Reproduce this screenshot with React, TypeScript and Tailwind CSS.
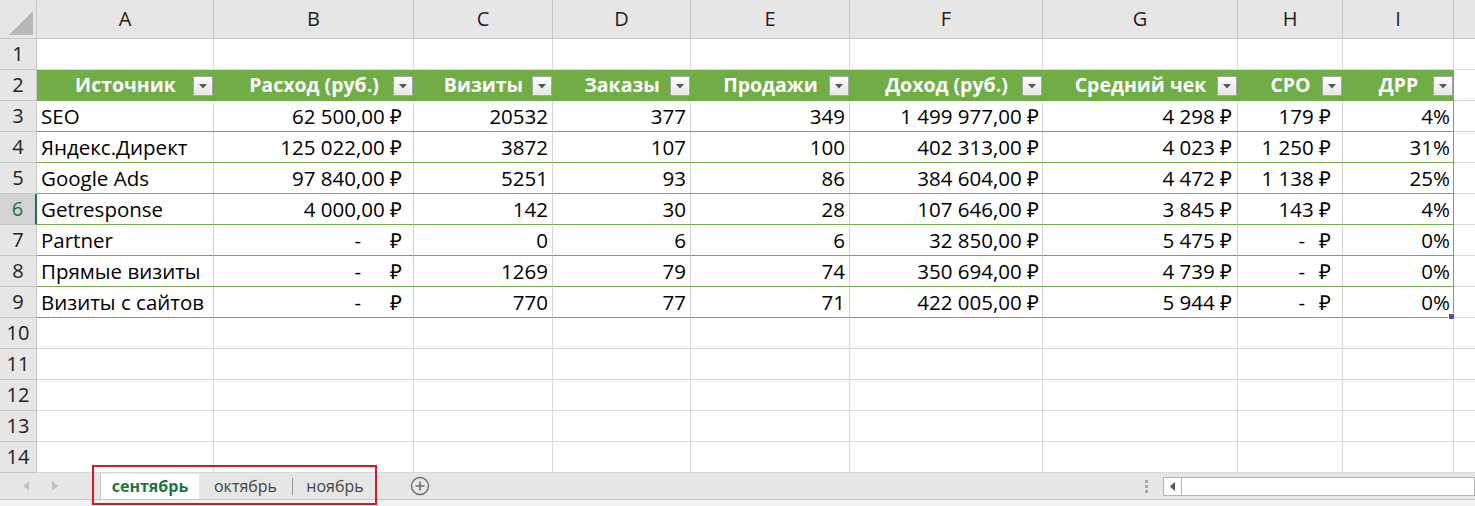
import React from 'react';

const COLS = ['A', 'B', 'C', 'D', 'E', 'F', 'G', 'H', 'I'];
const WIDTHS = [177, 200, 139, 138, 159, 193, 195, 105, 111];
const HEADERS = ['Источник', 'Расход (руб.)', 'Визиты', 'Заказы', 'Продажи', 'Доход (руб.)', 'Средний чек', 'CPO', 'ДРР'];

// "-" marks an accounting dash cell
const DATA: string[][] = [
  ['SEO', '62 500,00 ₽', '20532', '377', '349', '1 499 977,00 ₽', '4 298 ₽', '179 ₽', '4%'],
  ['Яндекс.Директ', '125 022,00 ₽', '3872', '107', '100', '402 313,00 ₽', '4 023 ₽', '1 250 ₽', '31%'],
  ['Google Ads', '97 840,00 ₽', '5251', '93', '86', '384 604,00 ₽', '4 472 ₽', '1 138 ₽', '25%'],
  ['Getresponse', '4 000,00 ₽', '142', '30', '28', '107 646,00 ₽', '3 845 ₽', '143 ₽', '4%'],
  ['Partner', '-', '0', '6', '6', '32 850,00 ₽', '5 475 ₽', '-', '0%'],
  ['Прямые визиты', '-', '1269', '79', '74', '350 694,00 ₽', '4 739 ₽', '-', '0%'],
  ['Визиты с сайтов', '-', '770', '77', '71', '422 005,00 ₽', '5 944 ₽', '-', '0%'],
];

// right padding per column (accounting columns keep extra room)
const PAD = ['', 'pr-[11px]', 'pr-[4px]', 'pr-[4px]', 'pr-[4px]', 'pr-[3px]', 'pr-[5px]', 'pr-[11px]', 'pr-[3px]'];

const font = { fontFamily: '"Open Sans", "Liberation Sans", sans-serif' };

function FilterButton() {
  return (
    <div className="absolute right-[1px] top-[6px] w-[20px] h-[20px] border border-[#a6a6a6] bg-gradient-to-b from-white to-[#e6e6e6] flex items-center justify-center">
      <svg width="8" height="5" viewBox="0 0 8 5">
        <path d="M0 0h8L4 4.5z" fill="#555" />
      </svg>
    </div>
  );
}

function RowHeader({ n, active }: { n: number; active?: boolean }) {
  return (
    <div
      className={`h-[31px] flex items-center justify-center text-[20px] border-b border-[#c8c8c8] ${
        active ? 'bg-[#d3d3d3] text-[#217346] border-r-2 border-r-[#217346]' : 'bg-[#e6e6e6] text-[#222] border-r border-r-[#c8c8c8]'
      }`}
    >
      {n}
    </div>
  );
}

function EmptyRow({ n }: { n: number }) {
  return (
    <>
      <RowHeader n={n} />
      {COLS.map((c) => (
        <div key={c} className="h-[31px] border-r border-b border-[#d9d9d9] bg-white" />
      ))}
      <div className="h-[31px] border-b border-[#d9d9d9] bg-white" />
    </>
  );
}

function DataCell({ value, col, last }: { value: string; col: number; last: boolean }) {
  const right = last ? 'border-r border-r-[#70ad47]' : 'border-r border-r-[#d4d4d4]';
  const base = `h-[31px] border-b border-b-[#70ad47] bg-white flex items-center text-[20.5px] text-black ${right}`;
  if (col === 0) {
    return <div className={`${base} pl-[4px]`}>{value}</div>;
  }
  if (value === '-') {
    const dashGap = col === 1 ? 'mr-[29px]' : 'mr-[14px]';
    return (
      <div className={`${base} justify-end ${PAD[col]}`}>
        <span className={dashGap}>-</span>
        <span>₽</span>
      </div>
    );
  }
  return <div className={`${base} justify-end ${PAD[col]}`}>{value}</div>;
}

export default function App() {
  const template = `37px ${WIDTHS.map((w) => `${w}px`).join(' ')} 1fr`;
  return (
    <div className="w-[1475px] h-[506px] bg-white overflow-hidden relative select-none" style={font}>
      <div className="grid" style={{ gridTemplateColumns: template }}>
        {/* column letters */}
        <div className="h-[39px] bg-[#e6e6e6] border-r border-b border-[#c8c8c8] relative">
          <svg className="absolute right-[3px] bottom-[3px]" width="24" height="24" viewBox="0 0 24 24">
            <path d="M24 0V24H0z" fill="#b8b8b8" />
          </svg>
        </div>
        {COLS.map((c) => (
          <div
            key={c}
            className="h-[39px] bg-[#e6e6e6] border-r border-b border-[#c8c8c8] flex items-center justify-center text-[20px] text-[#222]"
          >
            {c}
          </div>
        ))}
        <div className="h-[39px] bg-[#e6e6e6] border-b border-[#c8c8c8]" />

        <EmptyRow n={1} />

        {/* table header */}
        <RowHeader n={2} />
        {HEADERS.map((h) => (
          <div
            key={h}
            className="h-[31px] bg-[#70ad47] border-b border-[#70ad47] relative flex items-center justify-center text-[19.5px] font-bold text-white"
          >
            {h}
            <FilterButton />
          </div>
        ))}
        <div className="h-[31px] border-b border-[#d9d9d9] bg-white" />

        {DATA.map((row, i) => (
          <React.Fragment key={i}>
            <RowHeader n={i + 3} active={i + 3 === 6} />
            {row.map((v, j) => (
              <DataCell key={j} value={v} col={j} last={j === row.length - 1} />
            ))}
            <div className="h-[31px] border-b border-[#d9d9d9] bg-white" />
          </React.Fragment>
        ))}

        {[10, 11, 12, 13, 14].map((n) => (
          <EmptyRow key={n} n={n} />
        ))}
      </div>

      {/* fill handle */}
      <div className="absolute left-[1448px] top-[313px] w-[7px] h-[7px] bg-[#4655b5] border border-white" />

      {/* sheet tabs bar */}
      <div className="h-[27px] bg-[#e6e6e6] flex items-stretch border-b border-[#c6c6c6]">
        <div className="w-[100px] flex items-center gap-[21px] pl-[23px]">
          <svg width="7" height="10" viewBox="0 0 7 10">
            <path d="M6 0v10L0 5z" fill="#c4c4c4" />
          </svg>
          <svg width="7" height="10" viewBox="0 0 7 10">
            <path d="M1 0v10l6-5z" fill="#c4c4c4" />
          </svg>
        </div>
        <div className="flex items-stretch pt-[1px]">
          <div className="w-[99px] bg-white border-l border-[#c6c6c6] flex flex-col">
            <div className="flex-1 flex items-center justify-center text-[16px] font-bold text-[#217346]">сентябрь</div>
            <div className="h-[2px] bg-[#217346] mx-[1px] mb-[2px]" />
          </div>
          <div className="w-[93px] flex items-center justify-center text-[16px] text-[#444] pb-[2px]">октябрь</div>
          <div className="w-[1px] bg-[#9a9a9a] my-[4px]" />
          <div className="w-[84px] flex items-center justify-center text-[16px] text-[#444] pb-[2px]">ноябрь</div>
        </div>
        <div className="ml-[33px] flex items-center">
          <svg width="20" height="20" viewBox="0 0 20 20">
            <circle cx="10" cy="10" r="8.5" fill="none" stroke="#6e6e6e" strokeWidth="1.4" />
            <path d="M10 5.5v9M5.5 10h9" stroke="#6e6e6e" strokeWidth="1.6" />
          </svg>
        </div>
        <div className="flex-1" />
        <div className="flex flex-col justify-center gap-[2px] mr-[15px]">
          <div className="w-[3px] h-[3px] bg-[#a6a6a6]" />
          <div className="w-[3px] h-[3px] bg-[#a6a6a6]" />
          <div className="w-[3px] h-[3px] bg-[#a6a6a6]" />
        </div>
        <div className="flex items-center">
          <div className="h-[19px] w-[312px] bg-white border border-[#b4b4b4] flex items-stretch">
            <div className="w-[18px] border-r border-[#b4b4b4] flex items-center justify-center">
              <svg width="5" height="9" viewBox="0 0 5 9">
                <path d="M5 0v9L0 4.5z" fill="#555" />
              </svg>
            </div>
          </div>
        </div>
      </div>
      <div className="h-[6px] bg-[#f0f0f0]" />

      {/* red annotation */}
      <div className="absolute left-[92px] top-[465px] w-[285px] h-[40px] border-2 border-[#e3151e]" />
    </div>
  );
}
